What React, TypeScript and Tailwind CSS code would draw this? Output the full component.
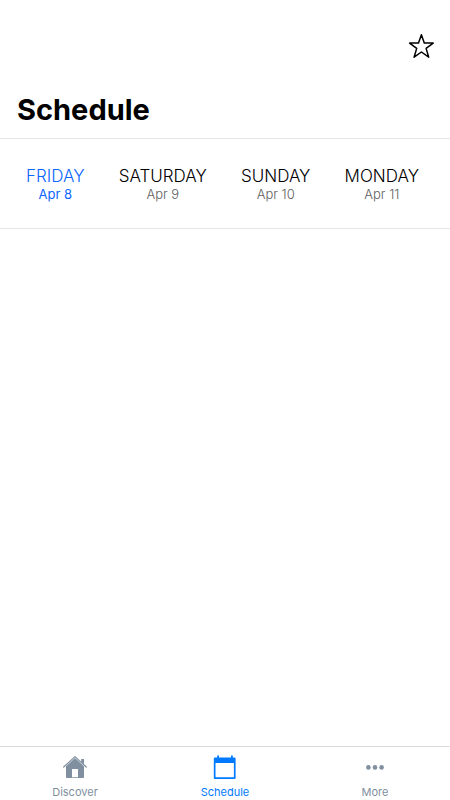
import { useState } from 'react';

interface Day {
  name: string;
  date: string;
}

interface IconProps {
  className?: string;
}

const days: Day[] = [
  { name: 'FRIDAY', date: 'Apr 8' },
  { name: 'SATURDAY', date: 'Apr 9' },
  { name: 'SUNDAY', date: 'Apr 10' },
  { name: 'MONDAY', date: 'Apr 11' },
];

const StarIcon: React.FC<IconProps> = ({ className }) => (
  <svg className={className} viewBox="0 0 28 28" fill="none" stroke="currentColor" strokeWidth={1.5} strokeLinejoin="round">
    <path d="M14.4 2.8 L17.3 11.1 H26.2 L19.1 16.4 L21.7 25.2 L14.4 20 L7.1 25.2 L9.7 16.4 L2.6 11.1 H11.5 Z" />
  </svg>
);

const HomeIcon: React.FC<IconProps> = ({ className }) => (
  <svg className={className} viewBox="0 0 24 24" fill="currentColor">
    <path
      fillRule="evenodd"
      d="M12 3 L21 11.2 V22.2 A0.8 0.8 0 0 1 20.2 23 H3.8 A0.8 0.8 0 0 1 3 22.2 V11.2 Z M9 14 V22.2 H15 V14 Z"
    />
    <path d="M18.2 4 H21 V9.4 L18.2 6.8 Z" />
    <path d="M0.7 12 L12 1.6 L23.3 12" fill="none" stroke="currentColor" strokeWidth={1.2} strokeLinecap="round" strokeLinejoin="round" />
  </svg>
);

const CalendarIcon: React.FC<IconProps> = ({ className }) => (
  <svg className={className} viewBox="0 0 24 24" fill="currentColor">
    <path
      fillRule="evenodd"
      d="M4.2 0.6 H6 V2.6 H18 V0.6 H19.8 V2.6 H21.4 A1.2 1.2 0 0 1 22.6 3.8 V23 A1 1 0 0 1 21.6 24 H1.8 A1 1 0 0 1 0.8 23 V3.8 A1.2 1.2 0 0 1 2 2.6 H4.2 Z M2.5 8 V21.7 A0.6 0.6 0 0 0 3.1 22.3 H20.3 A0.6 0.6 0 0 0 20.9 21.7 V8 Z"
    />
  </svg>
);

const MoreIcon: React.FC<IconProps> = ({ className }) => (
  <svg className={className} viewBox="0 0 24 24" fill="currentColor">
    <circle cx="5.4" cy="12.4" r="2.3" />
    <circle cx="12" cy="12.4" r="2.3" />
    <circle cx="18.6" cy="12.4" r="2.3" />
  </svg>
);

const tabs = [
  { name: 'Discover', path: '#discover', Icon: HomeIcon },
  { name: 'Schedule', path: '#schedule', Icon: CalendarIcon },
  { name: 'More', path: '#more', Icon: MoreIcon },
];

const App: React.FC = () => {
  const [activeDay, setActiveDay] = useState('FRIDAY');
  const [activeTab, setActiveTab] = useState('Schedule');

  return (
    <div className="min-h-screen flex flex-col bg-white font-['Inter',sans-serif] text-black">
      <header className="border-b border-[#e5e5e5] pr-[15px] pl-[17px] pt-8 pb-[10px]">
        <div className="flex justify-end">
          <button type="button" aria-label="Favorites">
            <StarIcon className="size-7" />
          </button>
        </div>
        <h1 className="mt-8 text-[29px] leading-9 font-bold">Schedule</h1>
      </header>

      {/* Day picker */}
      <div className="flex justify-between border-b border-[#e5e5e5] pl-[26px] pr-[31px] pt-[27px] pb-[26px]">
        {days.map((day) => (
          <button
            key={day.name}
            type="button"
            onClick={() => setActiveDay(day.name)}
            className={`flex flex-col items-center ${activeDay === day.name ? 'text-[#0a66ff]' : 'text-black'}`}
          >
            <span className="text-[17px] leading-5 font-light">{day.name}</span>
            <span
              className={`text-[13px] leading-4 ${
                activeDay === day.name ? '' : 'font-light text-[#606060]'
              }`}
            >
              {day.date}
            </span>
          </button>
        ))}
      </div>

      <main className="flex-1" />

      {/* Bottom tabs */}
      <nav className="flex border-t border-[#dcdcdc] pt-2">
        {tabs.map(({ name, path, Icon }) => (
          <a
            key={name}
            href={path}
            onClick={() => setActiveTab(name)}
            className={`flex flex-1 flex-col items-center gap-[5px] ${
              activeTab === name ? 'text-[#007aff]' : 'text-[#8090a0]'
            }`}
          >
            <Icon className="size-6" />
            <span className="text-[11px] leading-4">{name}</span>
          </a>
        ))}
      </nav>
    </div>
  );
};

export default App;
